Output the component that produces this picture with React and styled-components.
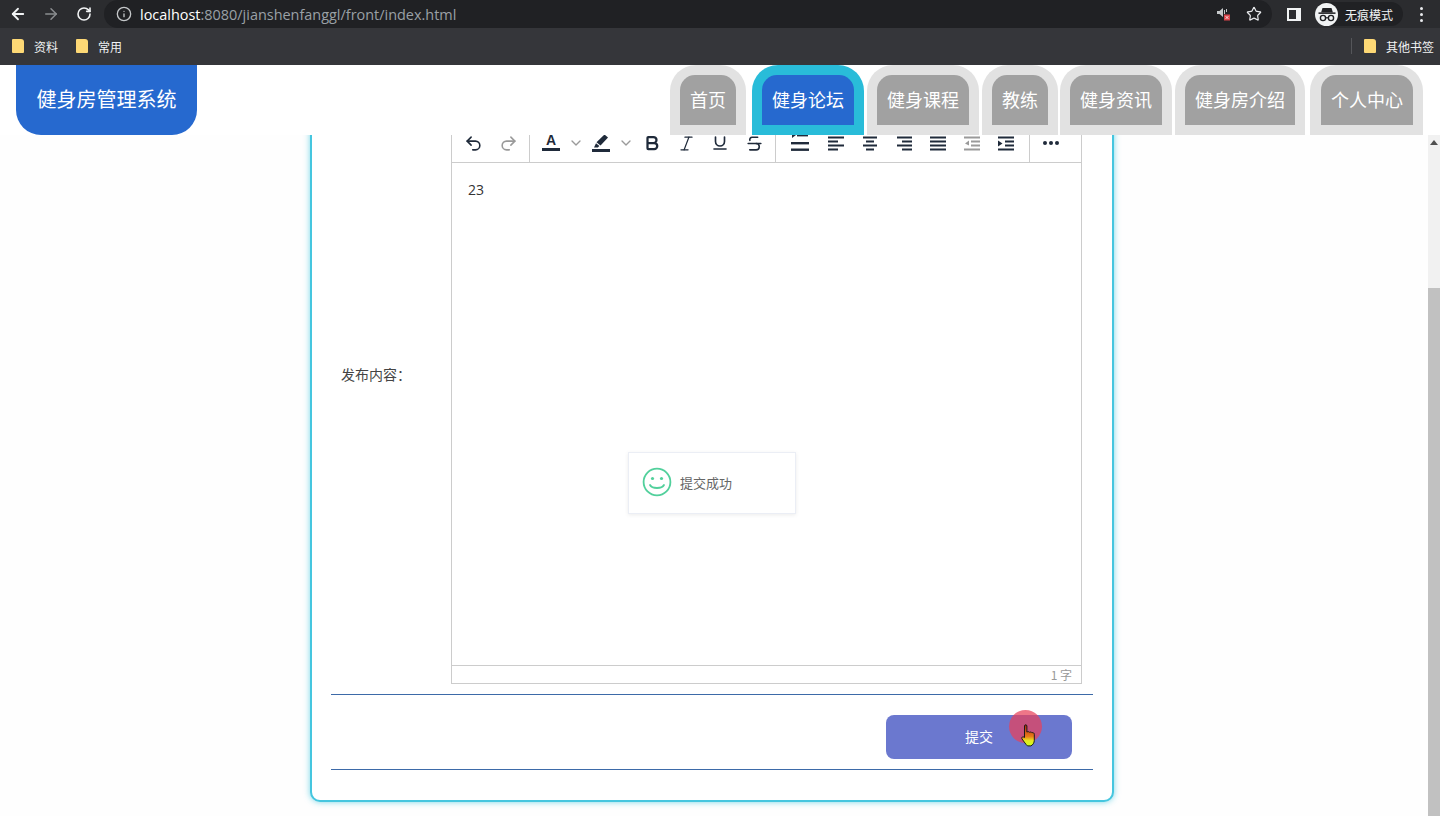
import React from "react";
import styled, { createGlobalStyle } from "styled-components";
import { ArrowLeft, ArrowRight, RotateCw, Info, Star, Undo2, Redo2, Bold, Italic, Underline, Strikethrough, ChevronDown } from "lucide-react";

const GlobalStyle = createGlobalStyle`
    html, body {
        margin: 0;
        padding: 0;
        height: 100%;
        overflow: hidden;
        background: #fff;
    }
    body {
        font-family: "Noto Sans CJK SC", "Noto Sans", sans-serif;
    }
    * { box-sizing: border-box; }
`;

const Page = styled.div`
    position: relative;
    width: 1440px;
    height: 816px;
    display: flex;
    flex-direction: column;
    overflow: hidden;
`;

/* browser chrome */
const TopBar = styled.div`
    height: 28px;
    background: #2b2c2f;
    display: flex;
    align-items: center;
    color: #fff;
`;

const NavIcon = styled.div`
    width: 33px;
    margin-left: ${(p) => p.$first ? "1px" : "0"};
    display: flex;
    justify-content: center;
    color: ${(p) => (p.$off ? "#8b8d90" : "#f1f3f4")};
`;

const Omnibox = styled.div`
    margin-left: 4px;
    width: 1168px;
    height: 28px;
    background: #202124;
    border-radius: 14px;
    display: flex;
    align-items: center;
    padding: 0 7px 0 12px;
    color: #c4c7c9;
`;

const Url = styled.div`
    margin-left: 8px;
    flex: 1;
    font-family: "Open Sans", sans-serif;
    font-size: 14.45px;
    color: #9aa0a6;
    span { color: #fff; }
`;

const StarBox = styled.div`
    margin-left: 12px;
    width: 22px;
    display: flex;
    justify-content: center;
    color: #e8eaed;
`;

const SidePanel = styled.div`
    margin-left: 15px;
    width: 14px;
    height: 13px;
    border: 2px solid #f1f3f4;
    border-right-width: 5px;
`;

const Profile = styled.div`
    margin-left: 14px;
    width: 88px;
    height: 24px;
    border-radius: 12px;
    background: #202124;
    display: flex;
    align-items: center;
    gap: 7px;
    font-size: 12px;
    color: #f1f3f4;
`;

const Avatar = styled.div`
    width: 23px;
    height: 23px;
    border-radius: 50%;
    background: #f1f3f4;
    display: flex;
    align-items: center;
    justify-content: center;
`;

const Dots = styled.div`
    margin-left: 17px;
    display: flex;
    flex-direction: column;
    gap: 3px;
    i {
        width: 3px;
        height: 3px;
        border-radius: 50%;
        background: #e8eaed;
    }
`;

const Bookmarks = styled.div`
    height: 37px;
    background: #35363a;
    display: flex;
    align-items: center;
    padding: 0 6px 1px 12px;
    font-size: 12px;
    color: #f1f3f4;
`;

const Mark = styled.div`
    display: flex;
    align-items: center;
    gap: 10px;
    margin-right: 18px;
    &:last-child { margin-right: 0; }
`;

const Folder = styled.div`
    width: 12px;
    height: 14px;
    background: #fdd875;
    border-radius: 1px 3px 1px 1px;
`;

const Spacer = styled.div`
    flex: 1;
`;

const MarkDivider = styled.div`
    width: 1px;
    height: 16px;
    background: #55565a;
    margin-right: 12px;
`;

/* site header */
const Header = styled.header`
    height: 70px;
    background: #fff;
    display: flex;
    justify-content: space-between;
    padding: 0 17px 0 16px;
    flex-shrink: 0;
    position: relative;
    z-index: 1;
`;

const Logo = styled.div`
    width: 181px;
    background: #2669cf;
    border-radius: 0 0 25px 25px;
    color: #fff;
    font-size: 20px;
    padding-bottom: 3px;
    display: flex;
    align-items: center;
    justify-content: center;
`;

const Tabs = styled.nav`
    display: flex;
    gap: 3px;
`;

const Tab = styled.div`
    padding: 10px 10px;
    margin-left: ${(p) => (p.$active ? "3px" : "0")};
    background: ${(p) => (p.$active ? "#29bcd9" : "#e2e2e2")};
    border-radius: 26px 26px 0 0;
    &:nth-child(5) { margin-left: -1px; }
    &:last-child { margin-left: 2px; padding-left: 11px; }
`;

const TabInner = styled.div`
    height: 50px;
    padding: 0 10px 3px;
    background: ${(p) => (p.$active ? "#2669cf" : "#a1a1a1")};
    border-radius: 15px 15px 0 0;
    color: #fff;
    font-size: 18px;
    display: flex;
    align-items: center;
    white-space: nowrap;
`;

/* page body */
const Viewport = styled.div`
    flex: 1;
    min-height: 0;
    display: flex;
    background: #fefefe;
`;

const Main = styled.main`
    flex: 1;
    overflow: hidden;
    display: flex;
    flex-direction: column;
    justify-content: flex-end;
    align-items: center;
    padding: 0 4px 14px 0;
`;

const Card = styled.div`
    width: 804px;
    flex-shrink: 0;
    padding: 0 19px 30px 19px;
    border: 2px solid #45c6df;
    border-radius: 10px;
    box-shadow: 0 0 6px rgba(47, 192, 220, 0.65);
    background: #fff;
`;

const FormRow = styled.div`
    display: flex;
    align-items: center;
    padding-bottom: 10px;
    border-bottom: 1px solid #3d6aa8;
`;

const Label = styled.label`
    width: 120px;
    padding: 0 0 2px 10px;
    flex-shrink: 0;
    font-size: 14px;
    color: #444;
`;

const Editor = styled.div`
    width: 631px;
    border: 1px solid #ccc;
`;

/* the toolbar wraps to two lines, the first is scrolled under the header */
const Toolbar = styled.div`
    padding-top: 58px;
    height: 97px;
    display: flex;
    border-bottom: 1px solid #ccc;
`;

const ToolGroup = styled.div`
    display: flex;
    align-items: center;
    height: 38px;
    padding: 0 0 0 ${(p) => p.$left}px;
    width: ${(p) => p.$w}px;
    border-right: ${(p) => (p.$last ? "none" : "1px solid #ccc")};
    gap: ${(p) => p.$gap || 0}px;
`;

const ToolBtn = styled.div`
    width: ${(p) => p.$w || 34}px;
    flex-shrink: 0;
    height: 38px;
    display: flex;
    align-items: center;
    justify-content: center;
    color: ${(p) => (p.$off ? "#9a9a9a" : "#1f2a3a")};
`;

const ColorA = styled.div`
    display: flex;
    flex-direction: column;
    align-items: center;
    font-family: "Liberation Sans", sans-serif;
    font-size: 14px;
    font-weight: 700;
    line-height: 11px;
    color: #1f2a3a;
    &::after {
        content: "";
        width: 18px;
        height: 3px;
        margin-top: 2px;
        background: #1f2a3a;
    }
`;

const EditorBody = styled.div`
    height: 502px;
    padding: 16px;
    font-family: "Open Sans", sans-serif;
    font-size: 14px;
    line-height: 22px;
    color: #333;
`;

const StatusBar = styled.div`
    height: 18px;
    border-top: 1px solid #ccc;
    text-align: right;
    padding-right: 9px;
    font-size: 12px;
    line-height: 18px;
    color: #999;
`;

const SubmitRow = styled.div`
    height: 75px;
    display: flex;
    align-items: flex-start;
    justify-content: flex-end;
    padding: 20px 21px 0 0;
    border-bottom: 1px solid #3d6aa8;
`;

const SubmitButton = styled.button`
    width: 186px;
    height: 44px;
    border: none;
    border-radius: 8px;
    padding: 0 0 3px;
    background: #6b78cf;
    color: #fff;
    font-family: inherit;
    font-size: 14px;
    cursor: pointer;
`;

const Scrollbar = styled.div`
    width: 12px;
    background: #f1f1f1;
    display: flex;
    flex-direction: column;
    align-items: center;
`;

const ScrollArrow = styled.div`
    margin-top: 5px;
    border-left: 4px solid transparent;
    border-right: 4px solid transparent;
    border-bottom: 5px solid #505050;
`;

const ScrollThumb = styled.div`
    margin-top: auto;
    width: 100%;
    height: 528px;
    background: #c1c1c1;
`;

const Toast = styled.div`
    position: absolute;
    left: 628px;
    top: 452px;
    width: 168px;
    height: 62px;
    background: #fff;
    border: 1px solid #ebeef5;
    box-shadow: 0 1px 4px rgba(0, 0, 0, 0.08);
    display: flex;
    align-items: center;
    gap: 8px;
    padding: 0 0 2px 13px;
    font-size: 13px;
    color: #666;
`;

const Pointer = styled.div`
    position: absolute;
    left: 1009px;
    top: 710px;
    width: 34px;
    height: 40px;
`;

const Halo = styled.div`
    width: 33px;
    height: 33px;
    border-radius: 50%;
    background: rgba(232, 65, 90, 0.72);
`;

const HandIcon = styled.svg`
    position: absolute;
    left: 11px;
    top: 14px;
`;

const lines = {
    left: [[0, 16], [0, 10], [0, 16], [0, 10]],
    center: [[1, 14], [4, 8], [1, 14], [4, 8]],
    right: [[1, 15], [6, 10], [1, 15], [6, 10]],
    justify: [[0, 16], [0, 16], [0, 16], [0, 16]],
};

const AlignIcon = ({ kind }) => (
    <svg width="17" height="15" viewBox="0 0 17 15">
        {lines[kind].map(([x, w], i) => (
            <rect key={i} x={x} y={i * 4 + 0.5} width={w} height="2" fill="currentColor" />
        ))}
    </svg>
);

const IndentIcon = ({ out }) => (
    <svg width="17" height="15" viewBox="0 0 17 15" fill="currentColor">
        <rect x="0" y="0.5" width="16" height="2" />
        <rect x="7" y="4.5" width="9" height="2" />
        <rect x="7" y="8.5" width="9" height="2" />
        <rect x="0" y="12.5" width="16" height="2" />
        {out
            ? <path d="M5 4.5v5L1 7.5z" />
            : <path d="M0 4.5v6l4.5-3z" />}
    </svg>
);

const ListIcon = () => (
    <svg width="18" height="22" viewBox="0 0 18 22" fill="currentColor">
        <path d="M1 0v6l4-3z" />
        <rect x="6" y="2.4" width="11" height="2" />
        <rect x="0" y="10" width="18" height="2.4" />
        <rect x="0" y="16.5" width="18" height="2.4" />
    </svg>
);

const MarkerIcon = () => (
    <svg width="20" height="18" viewBox="0 0 20 18" fill="#1f2a3a">
        <path d="M13.5 0.5l3.5 3-7.5 8-4-3.2z" />
        <path d="M5 9.2l3.4 2.9-1.6 1.5H3z" />
        <rect x="1" y="15" width="18" height="3" />
    </svg>
);

const SmileIcon = () => (
    <svg width="30" height="30" viewBox="0 0 30 30" fill="none" stroke="#52d09c" strokeWidth="1.8">
        <circle cx="15" cy="15" r="13.4" />
        <circle cx="10.5" cy="11.5" r="1.6" fill="#52d09c" stroke="none" />
        <circle cx="19.5" cy="11.5" r="1.6" fill="#52d09c" stroke="none" />
        <path d="M8 18c2 4 12 4 14 0" strokeLinecap="round" />
    </svg>
);

const IncognitoIcon = () => (
    <svg width="18" height="15" viewBox="0 0 18 15" fill="#202124">
        <path d="M4.5 1h9l1.4 4.4H3.1z" />
        <rect x="0.5" y="5.4" width="17" height="1.5" />
        <circle cx="5" cy="11" r="2.6" fill="none" stroke="#202124" strokeWidth="1.4" />
        <circle cx="13" cy="11" r="2.6" fill="none" stroke="#202124" strokeWidth="1.4" />
        <rect x="7.5" y="10.2" width="3" height="1.2" />
    </svg>
);

const MutedIcon = () => (
    <svg width="14" height="14" viewBox="0 0 14 14">
        <path d="M0 4h2.5L6 1v9L2.5 7H0z" fill="#c4c7c9" />
        <path d="M7.5 3v4M9.5 2v3" stroke="#c4c7c9" strokeWidth="1" />
        <rect x="7" y="7.5" width="6" height="6" fill="#d9444a" />
        <path d="M8.6 9.1l2.8 2.8M11.4 9.1l-2.8 2.8" stroke="#fff" strokeWidth="0.8" />
    </svg>
);

const tabs = ["首页", "健身论坛", "健身课程", "教练", "健身资讯", "健身房介绍", "个人中心"];

const App = () => {
    return (
        <Page>
            <GlobalStyle />
            <TopBar>
                <NavIcon $first><ArrowLeft size={18} strokeWidth={2.4} /></NavIcon>
                <NavIcon $off><ArrowRight size={18} strokeWidth={2} /></NavIcon>
                <NavIcon><RotateCw size={16} strokeWidth={2.4} /></NavIcon>
                <Omnibox>
                    <Info size={16} />
                    <Url><span>localhost</span>:8080/jianshenfanggl/front/index.html</Url>
                    <MutedIcon />
                    <StarBox><Star size={16} strokeWidth={1.8} /></StarBox>
                </Omnibox>
                <SidePanel />
                <Profile>
                    <Avatar><IncognitoIcon /></Avatar>
                    无痕模式
                </Profile>
                <Dots><i /><i /><i /></Dots>
            </TopBar>
            <Bookmarks>
                <Mark><Folder />资料</Mark>
                <Mark><Folder />常用</Mark>
                <Spacer />
                <MarkDivider />
                <Mark><Folder />其他书签</Mark>
            </Bookmarks>

            <Header>
                <Logo>健身房管理系统</Logo>
                <Tabs>
                    {tabs.map((t) => (
                        <Tab key={t} $active={t === "健身论坛"}>
                            <TabInner $active={t === "健身论坛"}>{t}</TabInner>
                        </Tab>
                    ))}
                </Tabs>
            </Header>

            <Viewport>
                <Main>
                    <Card>
                        <FormRow>
                            <Label>发布内容：</Label>
                            <Editor>
                                <Toolbar>
                                    <ToolGroup $w={78} $left={4} $gap={1}>
                                        <ToolBtn><Undo2 size={19} strokeWidth={2} /></ToolBtn>
                                        <ToolBtn $off><Redo2 size={19} strokeWidth={2} /></ToolBtn>
                                    </ToolGroup>
                                    <ToolGroup $w={246} $left={4}>
                                        <ToolBtn><ColorA>A</ColorA></ToolBtn>
                                        <ToolBtn $w={16} $off><ChevronDown size={16} /></ToolBtn>
                                        <ToolBtn><MarkerIcon /></ToolBtn>
                                        <ToolBtn $w={16} $off><ChevronDown size={16} /></ToolBtn>
                                        <ToolBtn $w={35}><Bold size={18} strokeWidth={3} /></ToolBtn>
                                        <ToolBtn><Italic size={19} strokeWidth={1.5} /></ToolBtn>
                                        <ToolBtn><Underline size={18} strokeWidth={2.2} /></ToolBtn>
                                        <ToolBtn><Strikethrough size={19} strokeWidth={2} /></ToolBtn>
                                    </ToolGroup>
                                    <ToolGroup $w={254} $left={5}>
                                        <ToolBtn $w={38.5}><ListIcon /></ToolBtn>
                                        <ToolBtn><AlignIcon kind="left" /></ToolBtn>
                                        <ToolBtn><AlignIcon kind="center" /></ToolBtn>
                                        <ToolBtn><AlignIcon kind="right" /></ToolBtn>
                                        <ToolBtn><AlignIcon kind="justify" /></ToolBtn>
                                        <ToolBtn $off><IndentIcon out /></ToolBtn>
                                        <ToolBtn><IndentIcon /></ToolBtn>
                                    </ToolGroup>
                                    <ToolGroup $w={50} $left={4} $last>
                                        <ToolBtn>
                                            <svg width="16" height="4" viewBox="0 0 16 4" fill="currentColor">
                                                <circle cx="2" cy="2" r="2" />
                                                <circle cx="8" cy="2" r="2" />
                                                <circle cx="14" cy="2" r="2" />
                                            </svg>
                                        </ToolBtn>
                                    </ToolGroup>
                                </Toolbar>
                                <EditorBody>23</EditorBody>
                                <StatusBar>1 字</StatusBar>
                            </Editor>
                        </FormRow>
                        <SubmitRow>
                            <SubmitButton>提交</SubmitButton>
                        </SubmitRow>
                    </Card>
                </Main>
                <Scrollbar>
                    <ScrollArrow />
                    <ScrollThumb />
                </Scrollbar>
            </Viewport>

            <Toast><SmileIcon />提交成功</Toast>
            <Pointer>
                <Halo />
                <HandIcon width="17" height="24" viewBox="0 0 17 24">
                    <defs>
                        <linearGradient id="hand" x1="0" y1="0" x2="0" y2="1">
                            <stop offset="0" stopColor="#b02808" />
                            <stop offset="0.55" stopColor="#e87a18" />
                            <stop offset="0.75" stopColor="#e8e820" />
                            <stop offset="1" stopColor="#c8ff20" />
                        </linearGradient>
                    </defs>
                    <path d="M4.5 2c0-1.6 2.4-1.6 2.4 0v6c1.4-.6 2.2-.4 2.6.3 1-.5 2-.3 2.4.4 1.2-.3 2.4.3 2.4 1.6v6c0 2.6-1.4 4.6-3.4 5.6H7.5c-1.6-1.4-3.5-4.2-5.5-7-1-1.4.8-2.9 2.5-1.4z" fill="url(#hand)" stroke="#1a1a1a" strokeWidth="1" />
                </HandIcon>
            </Pointer>
        </Page>
    );
};

export default App;
